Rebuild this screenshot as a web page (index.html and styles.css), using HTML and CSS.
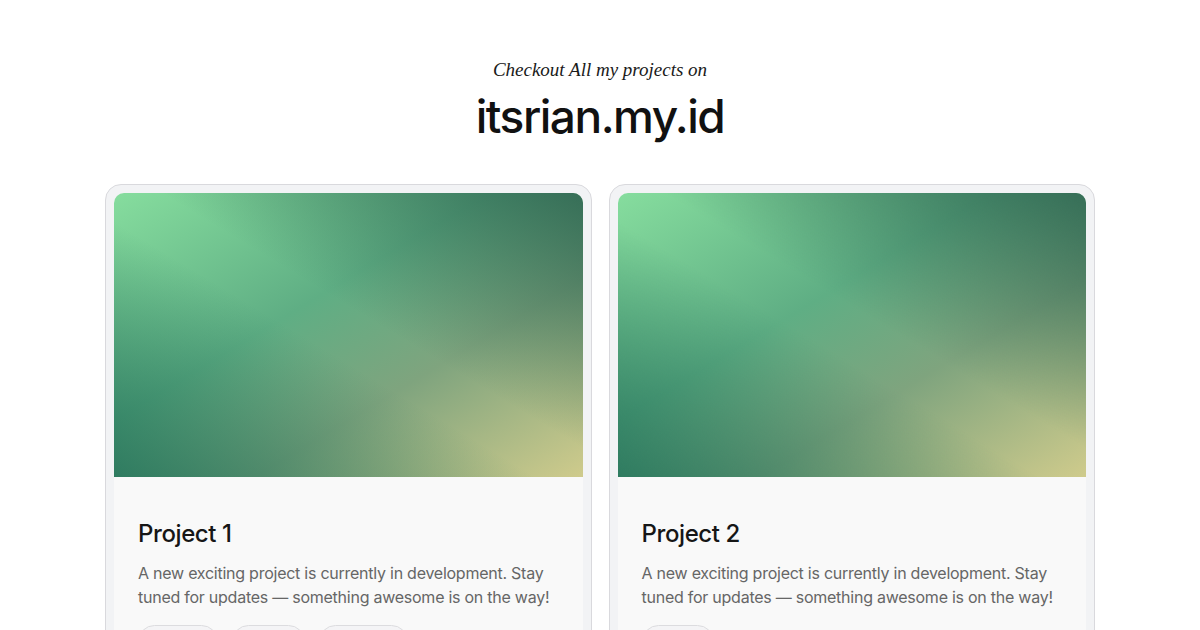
FILE: index.html
```html
<!DOCTYPE html>
<html>
<head>
<meta charset="utf-8">
<link rel="stylesheet" href="styles.css">
</head>
<body>
<header class="hero">
  <p class="eyebrow">Checkout All my projects on</p>
  <h1 class="domain">itsrian.my.id</h1>
</header>
<main class="grid">
  <article class="card">
    <div class="card-inner">
      <div class="cover"></div>
      <div class="body">
        <h2 class="title">Project 1</h2>
        <p class="desc">A new exciting project is currently in development. Stay tuned for updates — something awesome is on the way!</p>
        <div class="tags">
          <span class="tag">Next.js</span>
          <span class="tag">React</span>
          <span class="tag">Tailwind</span>
        </div>
      </div>
    </div>
  </article>
  <article class="card">
    <div class="card-inner">
      <div class="cover"></div>
      <div class="body">
        <h2 class="title">Project 2</h2>
        <p class="desc">A new exciting project is currently in development. Stay tuned for updates — something awesome is on the way!</p>
        <div class="tags">
          <span class="tag">React</span>
        </div>
      </div>
    </div>
  </article>
</main>
</body>
</html>
```
FILE: styles.css
```css
html, body {
  margin: 0;
  padding: 0;
  background: #ffffff;
  overflow: hidden;
}
body {
  width: 1200px;
  height: 630px;
  font-family: Inter, "Noto Sans", sans-serif;
  color: #111;
}
.hero {
  display: flex;
  flex-direction: column;
  align-items: center;
  padding-top: 58px;
}
.eyebrow {
  margin: 0;
  font-family: "Liberation Serif", "DejaVu Serif", serif;
  font-style: italic;
  font-size: 19px;
  line-height: 24px;
  color: #1a1a1a;
}
.domain {
  margin: 5px 0 0;
  font-size: 46px;
  font-weight: 500;
  line-height: 58px;
  letter-spacing: -1.5px;
  color: #111;
}
.grid {
  width: 990px;
  margin: 39px auto 0;
  display: grid;
  grid-template-columns: 1fr 1fr;
  gap: 17px;
}
.card {
  border: 1px solid #d9d9dd;
  border-radius: 16px;
  background: #f2f3f5;
  padding: 8px;
}
.card-inner {
  border-radius: 10px;
  overflow: hidden;
  background: #f9f9f9;
}
.cover {
  height: 284px;
  background:
    linear-gradient(to top right, rgba(32,112,88,0.8) 0%, rgba(40,110,90,0) 45%, rgba(40,110,90,0) 55%, rgba(45,100,80,0.85) 100%),
    linear-gradient(to bottom right, #86dd9e 0%, #5fae84 40%, #7fa47e 65%, #cfcb8c 100%);
}
.body {
  padding: 42px 24px 20px;
}
.title {
  margin: 0;
  font-size: 24px;
  font-weight: 500;
  line-height: 30px;
  letter-spacing: -0.4px;
  color: #161616;
}
.desc {
  margin: 12px 0 0;
  font-size: 16px;
  line-height: 24px;
  color: #666;
  letter-spacing: -0.25px;
}
.tags {
  display: flex;
  gap: 14px;
  margin-top: 16px;
}
.tag {
  border: 1px solid #dcdcdf;
  border-radius: 999px;
  padding: 9px 18px 6px;
  font-size: 13px;
  line-height: 16px;
  color: #555;
  background: #f4f4f6;
}
```
